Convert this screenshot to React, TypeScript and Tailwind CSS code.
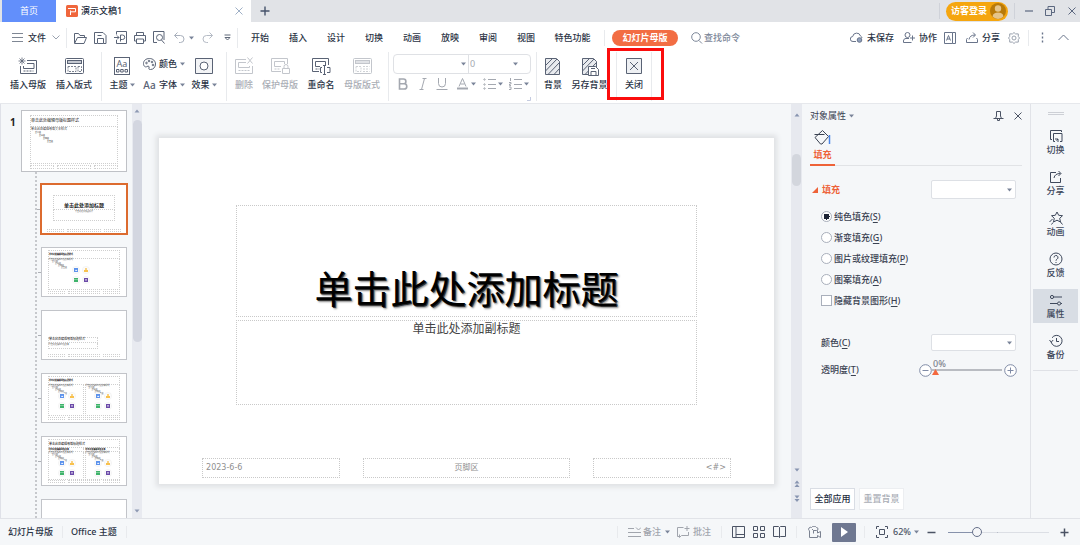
import React, { useState } from "react";

type IconProps = { w: number; h: number; className?: string; children: React.ReactNode };

function Icon({ w, h, className = "", children }: IconProps) {
  return (
    <svg
      width={w}
      height={h}
      viewBox={`0 0 ${w} ${h}`}
      fill="none"
      stroke="currentColor"
      strokeWidth="1"
      aria-hidden="true"
      className={`shrink-0 ${className}`}
    >
      {children}
    </svg>
  );
}

function Caret({ className = "" }: { className?: string }) {
  return (
    <Icon w={5} h={4} className={`text-[#7a8499] ${className}`}>
      <path d="M0 0.500h5L2.500 3.500z" fill="currentColor" stroke="none" />
    </Icon>
  );
}

function Divider({ className = "", dark }: { className?: string; dark?: boolean }) {
  return <span className={`w-px shrink-0 ${dark ? "bg-[#cfd2d9]" : "bg-[#e8eaed]"} ${className}`} />;
}

/* ---------- title bar ---------- */

function TitleBar() {
  return (
    <header className="flex h-[22px] shrink-0 items-stretch bg-[#e1e3e7] pl-[2px] text-[#2d3748]">
      <button className="w-[54px] bg-[#628ffb] text-white">首页</button>
      <div className="flex w-[195px] items-center bg-white pl-[10px]">
        <Icon w={12} h={12}>
          <rect width="12" height="12" rx="1.500" fill="#f0663c" stroke="none" />
          <path d="M2 3.500H9.500v3.300H4.500V10M4.500 6.800V5.500" stroke="#fff" />
        </Icon>
        <span className="ml-[3px] text-[9px] font-medium text-[#222b3c]">演示文稿1</span>
        <button aria-label="关闭标签" className="mr-2 ml-auto text-[#9fb0c6]">
          <Icon w={8} h={8}>
            <path d="M0.500 0.500l7 7M7.500 0.500l-7 7" />
          </Icon>
        </button>
      </div>
      <button aria-label="新建" className="ml-[9px] flex items-center text-[#46536b]">
        <Icon w={10} h={10}>
          <path d="M5 0.500v9M0.500 5h9" strokeWidth="1.400" />
        </Icon>
      </button>
      <div className="ml-auto flex items-center pr-1 text-[#5c6880]">
        <Divider dark className="h-4" />
        <button className="ml-[6px] flex h-[19px] w-[62px] items-center rounded-full bg-[#f5a60f] pl-[5px] font-bold text-white">
          访客登录
          <Icon w={16} h={16} className="ml-[3px]">
            <circle cx="8" cy="8" r="8" fill="#b87a0a" stroke="none" />
            <circle cx="8" cy="5.500" r="3.200" fill="#e5c48a" stroke="none" />
            <path d="M2.500 13.500c.5-3 2.500-4 5.500-4s5 1 5.500 4A8 8 0 0 1 8 16a8 8 0 0 1-5.500-2.500z" fill="#e5c48a" stroke="none" />
          </Icon>
        </button>
        <Divider dark className="ml-[6px] h-4" />
        <button aria-label="最小化" className="ml-[10px]">
          <Icon w={8} h={10}>
            <path d="M0 5h8" strokeWidth="1.200" />
          </Icon>
        </button>
        <button aria-label="还原" className="ml-3">
          <Icon w={10} h={10}>
            <path d="M0.500 3.500h6v6h-6zM3 3.500v-3h6.500v6h-3" />
          </Icon>
        </button>
        <button aria-label="关闭窗口" className="ml-[13px]">
          <Icon w={8} h={8}>
            <path d="M0.500 0.500l7 7M7.500 0.500l-7 7" />
          </Icon>
        </button>
      </div>
    </header>
  );
}

/* ---------- menu row ---------- */

const menuTabs = ["开始", "插入", "设计", "切换", "动画", "放映", "审阅", "视图"];

function MenuBar() {
  return (
    <nav className="flex h-[30px] shrink-0 items-center bg-white pt-px pr-[11px] pl-3 text-[#2b3446]">
      <button className="flex items-center">
        <Icon w={11} h={9} className="text-[#7f8794]">
          <path d="M0 0.500h11M0 4.500h11M0 8.500h11" />
        </Icon>
        <span className="ml-[5px] font-medium">文件</span>
        <Icon w={8} h={5} className="ml-[6px] text-[#9aa2b0]">
          <path d="M0.500 0.500l3.500 3.500 3.500-3.500" />
        </Icon>
      </button>
      <Divider className="ml-[6px] h-5" />
      <div className="ml-[7px] flex items-center gap-[7px] text-[#5a6477]">
        <button aria-label="打开">
          <Icon w={13} h={12}>
            <path d="M0.500 11V1.500h4l1.500 2h4.500V5M0.500 11.500h9.500l2.500-6H3.500l-3 6" />
          </Icon>
        </button>
        <button aria-label="保存">
          <Icon w={13} h={12}>
            <path d="M3 11.500H0.500v-11h8.500l3 3v8H9.500M3.500 11.500v-5h6v5zM3.500 3.500h4" />
          </Icon>
        </button>
        <button aria-label="输出为PDF">
          <Icon w={13} h={13}>
            <path d="M2.500 3.500v-3h10v12h-10V9M0 6.500h5M3 4.500l2 2-2 2M6.500 10.500v-6.500h2a2 2 0 0 1 0 4.500H6.500" />
          </Icon>
        </button>
        <button aria-label="打印">
          <Icon w={12} h={12}>
            <path d="M2.500 3.500v-3h7v3M2.500 9H0.500V3.500h11V9h-2M2.500 7h7v4.500h-7z" />
          </Icon>
        </button>
        <button aria-label="打印预览">
          <Icon w={12} h={13}>
            <path d="M4 11.500H0.500v-11h10.500V9" />
            <circle cx="6.500" cy="6.500" r="3" />
            <path d="M8.500 9l3 3.500" />
          </Icon>
        </button>
      </div>
      <button aria-label="撤销" className="ml-[9px] flex items-center text-[#a9b0bc]">
        <Icon w={11} h={11}>
          <path d="M3.500 0.500l-3 3 3 3M0.500 3.500h6a3.500 3.500 0 0 1 0 7H5" />
        </Icon>
        <Caret className="ml-1" />
      </button>
      <button aria-label="重做" className="ml-2 text-[#b5bbc5]">
        <Icon w={11} h={11}>
          <path d="M7.500 0.500l3 3-3 3M10.500 3.500h-6a3.500 3.500 0 0 0 0 7H6" />
        </Icon>
      </button>
      <button aria-label="自定义快速访问" className="ml-[11px] text-[#5f6878]">
        <Icon w={7} h={7}>
          <path d="M0.500 1h6M1 3.500h5L3.500 6z" />
        </Icon>
      </button>
      <Divider className="ml-[6px] h-5" />
      <div className="ml-[3px] flex font-medium">
        {menuTabs.map((t) => (
          <button key={t} className="w-[38px]">
            {t}
          </button>
        ))}
        <button className="w-[55px]">特色功能</button>
      </div>
      <Divider className="ml-1 h-4" />
      <button className="ml-[7px] h-4 w-[66px] rounded-full bg-[#f26d43] font-bold text-white">幻灯片母版</button>
      <label className="ml-[13px] flex items-center text-[#7d8799]">
        <Icon w={12} h={12}>
          <circle cx="5" cy="5" r="4.300" />
          <path d="M8 8.500l3 3" />
        </Icon>
        <input
          aria-label="查找命令"
          placeholder="查找命令"
          className="ml-px w-12 bg-transparent font-medium outline-none placeholder:text-[#7d8799]"
        />
      </label>
      <div className="ml-auto flex items-center text-[#69748a]">
        <button className="flex items-center gap-1">
          <Icon w={13} h={11}>
            <path d="M6 9.500H3a2.500 2.500 0 0 1-.3-5A4 4 0 0 1 10.500 4 2.600 2.600 0 0 1 12 6" />
            <circle cx="9.500" cy="8" r="2.300" fill="#8fa0bd" />
          </Icon>
          <span className="font-medium text-[#2b3446]">未保存</span>
        </button>
        <button className="ml-[9px] flex items-center gap-1">
          <Icon w={12} h={11}>
            <circle cx="4.500" cy="3" r="2.500" />
            <path d="M8.500 10.500h-8V9c0-1.500 1-2.500 2.500-2.500h3M9.500 3.500v5M7 6h5" />
          </Icon>
          <span className="font-medium text-[#2b3446]">协作</span>
        </button>
        <button aria-label="翻译" className="ml-[7px]">
          <Icon w={13} h={12}>
            <path d="M0.500 0.500h8v11h-8zM8.500 0.500h3v11h-3M2.500 8.500l2-5 2 5M3 7h3" />
          </Icon>
        </button>
        <button className="ml-[9px] flex items-center gap-1">
          <Icon w={12} h={11}>
            <path d="M1.500 6L0.500 7.500v3h11v-3L10.500 6M3 7.500c.5-3 2.500-4.500 6-4.500M7 0.500L9.500 3 7 5.500" />
          </Icon>
          <span className="font-medium text-[#2b3446]">分享</span>
        </button>
        <button aria-label="设置" className="ml-2 text-[#9aa2ae]">
          <Icon w={12} h={12}>
            <path d="M6 0.500l1.500 1.400h2.800v2.600l1.200 1.500-1.200 1.500v2.600H7.500L6 11.500 4.500 10.100H1.700V7.500L0.500 6l1.200-1.500V1.900h2.800z" />
            <circle cx="6" cy="6" r="2" />
          </Icon>
        </button>
        <Divider className="ml-2 h-4" />
        <button aria-label="更多" className="ml-3">
          <Icon w={3} h={11}>
            <path d="M1.500 0.500v2M1.500 4.500v2M1.500 8.500v2" strokeWidth="1.400" />
          </Icon>
        </button>
        <button aria-label="折叠功能区" className="ml-[14px]">
          <Icon w={11} h={7}>
            <path d="M0.500 6l5-5 5 5" />
          </Icon>
        </button>
      </div>
    </nav>
  );
}

/* ---------- ribbon ---------- */

type RibbonButtonProps = {
  label: string;
  icon: React.ReactNode;
  width: string;
  caret?: boolean;
  disabled?: boolean;
};

function RibbonButton({ label, icon, width, caret, disabled }: RibbonButtonProps) {
  return (
    <button
      disabled={disabled}
      className={`flex shrink-0 flex-col items-center pt-1 font-medium whitespace-nowrap ${width} ${
        disabled ? "text-[#a9adb5]" : "text-[#2b3446]"
      }`}
    >
      <span className={`flex h-5 items-center ${disabled ? "text-[#c3c6cc]" : "text-[#5a6375]"}`}>{icon}</span>
      <span className="mt-[3px] flex items-center gap-[2px]">
        {label}
        {caret && <Caret />}
      </span>
    </button>
  );
}

function Hatch({ children }: { children?: React.ReactNode }) {
  return (
    <Icon w={18} h={19}>
      <path d="M1.500 1.500h11l3 3v13h-14z" fill="#e9ebef" />
      <path d="M1.500 8.500l7-7M1.500 14l11.500-12M4 17.500l11.500-12M10 17.500l5.500-6" />
      {children}
    </Icon>
  );
}

function SmallTool({ label, className = "", children }: { label: string; className?: string; children: React.ReactNode }) {
  return (
    <button disabled aria-label={label} className={`flex h-4 items-center ${className}`}>
      {children}
    </button>
  );
}

function Ribbon() {
  return (
    <section className="flex h-[52px] shrink-0 items-stretch border-b border-[#e6e8ec] bg-white pl-[5px]">
      <RibbonButton
        label="插入母版"
        width="w-[46px]"
        icon={
          <Icon w={20} h={18}>
            <path d="M9 3.500h9.500v13h-16V9M9 6.500h7v5H5.500V9" />
            <path d="M5.500 14h10" strokeDasharray="2 1" />
            <path d="M4 0.500v7M0.500 4h7M1.500 1.500l5 5M6.500 1.500l-5 5" strokeWidth="0.800" />
          </Icon>
        }
      />
      <RibbonButton
        label="插入版式"
        width="w-[46px]"
        icon={
          <Icon w={19} h={17}>
            <rect x="0.500" y="0.500" width="18" height="15" rx="1" />
            <rect x="2.500" y="2.500" width="14" height="3" fill="#c5c9d1" />
            <path d="M3 8.500h8v5H3zM13 8.500h3.500v5H13z" strokeDasharray="2 1" strokeWidth="0.800" />
          </Icon>
        }
      />
      <Divider className="mb-[2px] ml-1" />
      <RibbonButton
        label="主题"
        width="w-[40px]"
        caret
        icon={
          <span className="flex h-[18px] w-4 flex-col items-center border border-current">
            <span className="text-[9px] leading-[11px] font-normal">Aa</span>
            <Icon w={12} h={4}>
              <path d="M0.500 0.500h2.500v2.500H0.500zM4.700 0.500h2.500v2.500H4.700zM9 0.500h2.500v2.500H9z" />
            </Icon>
          </span>
        }
      />
      <div className="flex w-[43px] shrink-0 flex-col gap-[9px] pt-[6px] pl-px font-medium text-[#2b3446]">
        <button className="flex items-center">
          <Icon w={13} h={12} className="text-[#5a6375]">
            <path d="M6.500 0.500C3 0.500 0.500 2.500 0.500 5.500s2 4 3.500 3 2.500 0 2 1.500 .5 1.500 1.500 1.500c3 0 5-2.500 5-5.500s-2.500-5.500-6-5.500z" />
            <circle cx="3.500" cy="5" r="0.800" />
            <circle cx="6" cy="3" r="0.800" />
            <circle cx="9" cy="4" r="0.800" />
            <circle cx="10" cy="7" r="0.800" />
          </Icon>
          <span className="ml-[3px]">颜色</span>
          <Caret className="ml-[3px]" />
        </button>
        <button className="flex items-center">
          <span className="w-[13px] text-[10px] text-[#5a6375]">Aa</span>
          <span className="ml-[3px]">字体</span>
          <Caret className="ml-[3px]" />
        </button>
      </div>
      <RibbonButton
        label="效果"
        width="w-[38px]"
        caret
        icon={
          <Icon w={18} h={16}>
            <path d="M0.500 0.500h17v15h-17z" fill="#f3f4f6" />
            <circle cx="9" cy="8" r="4" fill="#fff" />
          </Icon>
        }
      />
      <Divider className="mb-[2px] ml-[3px]" />
      <RibbonButton
        label="删除"
        width="w-[34px]"
        disabled
        icon={
          <Icon w={19} h={18}>
            <path d="M11 2.500H0.500v14h17V9M11 5.500H3.500v5h11V9M12.500 0.500l5 6M17.500 0.500l-5 6" />
            <path d="M3.500 13.500h11" strokeDasharray="2 1" />
          </Icon>
        }
      />
      <RibbonButton
        label="保护母版"
        width="w-[38px]"
        disabled
        icon={
          <Icon w={19} h={18}>
            <path d="M10 14.500H0.500v-13h16V7M10 9.500H3.500v-5h10V7M11.500 11.500h7v5h-7zM13 11.500V9.500a2 2 0 0 1 4 0v2" />
            <path d="M3.500 12h6" strokeDasharray="2 1" />
          </Icon>
        }
      />
      <RibbonButton
        label="重命名"
        width="w-[44px]"
        icon={
          <Icon w={19} h={18}>
            <path d="M7 14.500H0.500v-13h16V8M8 9.500H3.500v-5h10V8M10 10.500H8.500v5H10M15 10.500h3v5h-3M11 8.500h3M11 17.500h3M12.500 8.500v9" />
            <path d="M3.500 12h4" strokeDasharray="2 1" />
          </Icon>
        }
      />
      <RibbonButton
        label="母版版式"
        width="w-[38px]"
        disabled
        icon={
          <Icon w={19} h={17}>
            <rect x="0.500" y="0.500" width="18" height="15" rx="1" />
            <rect x="2.500" y="2.500" width="14" height="3" fill="#e0e2e6" />
            <path d="M3 8.500h5v5H3zM10 8.500h6.500M10 11h6.500M10 13.500h6.500" strokeDasharray="2 1" strokeWidth="0.800" />
          </Icon>
        }
      />
      <Divider className="mb-[2px] ml-[7px]" />
      <div className="ml-1 flex w-[138px] shrink-0 flex-col pt-[2px] text-[#a4a8b0]">
        <div className="flex h-5 shrink-0 rounded-sm border border-[#dfe1e5]">
          <div className="relative flex w-[75px] items-center border-r border-[#dfe1e5]">
            <select aria-label="字体名称" className="h-full w-full appearance-none bg-transparent outline-none">
              <option></option>
            </select>
            <Caret className="pointer-events-none absolute right-[2px]" />
          </div>
          <div className="relative flex flex-1 items-center">
            <select aria-label="字号" className="h-full w-full appearance-none bg-transparent pl-px outline-none">
              <option>0</option>
            </select>
            <Caret className="pointer-events-none absolute right-3" />
          </div>
        </div>
        <div className="mt-px flex h-[17px] shrink-0 items-center pl-[5px]">
          <SmallTool label="加粗" className="w-[21px]">
            <Icon w={10} h={12}>
              <path d="M1.500 1h4a2.400 2.400 0 0 1 0 4.800h-4zM1.500 5.800h4.700a2.600 2.600 0 0 1 0 5.200H1.500z" strokeWidth="1.600" />
            </Icon>
          </SmallTool>
          <SmallTool label="倾斜" className="w-[17px]">
            <Icon w={8} h={12}>
              <path d="M3.500 0.500H7.500M0.500 11.500h4M5.500 0.500l-3 11" />
            </Icon>
          </SmallTool>
          <SmallTool label="下划线" className="w-[21px]">
            <Icon w={12} h={12}>
              <path d="M2.500 0v5.500a3.500 3.500 0 0 0 7 0V0M0.500 11.500h11" />
            </Icon>
          </SmallTool>
          <SmallTool label="字体颜色" className="w-[26px]">
            <Icon w={11} h={12}>
              <path d="M2 8.500l3.500-8L9 8.500M3.500 6h4" />
              <path d="M0 10.500h11" strokeWidth="2" />
            </Icon>
            <Caret className="ml-[3px]" />
          </SmallTool>
          <SmallTool label="项目符号" className="w-[26px]">
            <Icon w={13} h={12}>
              <path d="M5 1.500h8M5 6.500h8M5 10.500h8" />
              <circle cx="1.500" cy="1.500" r="0.700" />
              <circle cx="1.500" cy="6.500" r="0.700" />
              <circle cx="1.500" cy="10.500" r="0.700" />
            </Icon>
            <Caret className="ml-[2px]" />
          </SmallTool>
          <SmallTool label="编号" className="w-5">
            <Icon w={13} h={12}>
              <path d="M5 1.500h8M5 6.500h8M5 10.500h8M1.500 0v3M0 4.500h2v1.500H0.500v1.500H2M0 9h2v2.500H0" />
            </Icon>
            <Caret className="ml-[2px]" />
          </SmallTool>
        </div>
        <Icon w={4} h={4} className="mt-[5px] ml-auto text-[#c4cbe0]">
          <path d="M3.500 0v3.500H0" />
        </Icon>
      </div>
      <Divider className="mb-[2px] ml-[5px]" />
      <RibbonButton label="背景" width="w-[32px]" icon={<Hatch />} />
      <RibbonButton
        label="另存背景"
        width="w-[41px]"
        icon={
          <Hatch>
            <path d="M7.500 9.500h7l3 3v6h-10zM10 18.500v-4h5v4M10 11.500h4" fill="#fff" />
          </Hatch>
        }
      />
      <div className="relative ml-[6px] flex">
        <Divider className="mb-[2px]" />
        <RibbonButton
          label="关闭"
          width="w-[34px]"
          icon={
            <Icon w={16} h={17}>
              <path d="M0.500 0.500h15v15h-15z" fill="#eef0f3" />
              <path d="M4 4l8 8M12 4l-8 8" />
            </Icon>
          }
        />
        <Divider className="mb-[2px]" />
        <span className="pointer-events-none absolute -top-[4px] -right-[12px] bottom-[3px] -left-[9px] z-10 border-3 border-[#fb0d0d]" />
      </div>
    </section>
  );
}

/* ---------- slide thumbnails ---------- */

const ph = "border border-dotted border-[#cfcfcf]";

function ThumbFooter() {
  return (
    <div className="mt-auto flex h-[3px] shrink-0 gap-[3px]">
      <span className={`w-[23%] ${ph}`} />
      <span className={`flex-1 ${ph}`} />
      <span className={`w-[23%] ${ph}`} />
    </div>
  );
}

function Levels() {
  return (
    <div className="text-[2px] leading-[2px] text-[#555]">
      <p>单击此处编辑母版文本样式</p>
      <p className="pl-[3px]">第二级</p>
      <p className="pl-[6px]">第三级</p>
      <p className="pl-[9px]">第四级</p>
      <p className="pl-[12px]">第五级</p>
    </div>
  );
}

function ContentIcons({ className = "" }: { className?: string }) {
  return (
    <Icon w={18} h={18} className={className}>
      <g stroke="#eeeeee" fill="#fbfbfb" strokeWidth="0.500">
        <circle cx="4" cy="4" r="3.700" />
        <circle cx="14" cy="4" r="3.700" />
        <circle cx="4" cy="14" r="3.700" />
        <circle cx="14" cy="14" r="3.700" />
      </g>
      <g stroke="none">
        <path d="M2 2h4v4H2z" fill="#5c92ec" />
        <path d="M3 5l1-1.500L5.500 5z" fill="#fff" />
        <path d="M12 6V4h1.300V2h1.400v2H16v2z" fill="#f8c14e" />
        <path d="M2 12h4v4H2z" fill="#3fb36b" />
        <path d="M2 13.500h4v.5H2z" fill="#bfe6cd" />
        <path d="M12 12h4v4h-4z" fill="#6b4aa8" />
        <path d="M13.300 13.200h1.400v1.400h-1.400z" fill="#fff" />
      </g>
    </Icon>
  );
}

function MiniContent({ single }: { single?: boolean }) {
  return (
    <div className={`relative flex-1 ${ph} border-t-0`}>
      <Levels />
      <ContentIcons className={`absolute top-[7px] left-1/2 ${single ? "-translate-x-3" : "-translate-x-2"}`} />
    </div>
  );
}

function MiniTitle({ large }: { large?: boolean }) {
  return (
    <div
      className={`flex h-[9px] shrink-0 items-center ${ph} ${
        large ? "text-[3px]" : "text-[2px] font-bold"
      } leading-[4px] text-black`}
    >
      单击此处编辑母版标题样式
    </div>
  );
}

function Thumb({ label, selected, children }: { label: string; selected?: boolean; children: React.ReactNode }) {
  return (
    <button
      aria-label={label}
      className={`relative flex h-[50px] w-full shrink-0 flex-col bg-white px-[6px] py-[2px] text-left ${
        selected ? "outline-2 -outline-offset-1 outline-[#dc6b2f]" : "border border-[#c2c4c9]"
      }`}
    >
      <span className="absolute top-1/2 -left-[4px] w-[3px] border-t border-[#aeb1b7]" />
      {children}
    </button>
  );
}

function ThumbPanel() {
  return (
    <aside className="flex w-[142px] shrink-0 border-l border-[#dfe1e8]">
      <div className="flex min-w-0 flex-1 flex-col overflow-hidden pt-[6px] pr-[5px]">
        <div className="flex shrink-0">
          <span className="w-5 pt-[6px] pl-[9px] text-[10px] leading-3 font-bold text-[#222]">1</span>
          <button
            aria-label="幻灯片母版 1"
            className="flex h-[62px] flex-1 flex-col border border-[#bfc1c6] bg-white px-2 pt-1 pb-[2px] text-left"
          >
            <div className={`h-3 text-[4px] leading-[10px] text-[#222] ${ph}`}>单击此处编辑母版标题样式</div>
            <div className={`flex-1 pt-px text-[2px] leading-[3px] text-[#333] ${ph} border-t-0`}>
              <p className="text-[3px] leading-[3px]">单击此处编辑母版文本样式</p>
              <p className="pl-1">第二级</p>
              <p className="pl-2">第三级</p>
              <p className="pl-3">第四级</p>
              <p className="pl-4">第五级</p>
            </div>
            <div className="mt-px flex h-1 gap-[3px]">
              <span className={`w-[27%] ${ph}`} />
              <span className={`flex-1 ${ph}`} />
              <span className={`w-[27%] ${ph}`} />
            </div>
          </button>
        </div>
        <div className="flex min-h-0 flex-1">
          <div className="ml-[34px] w-[2px] shrink-0 bg-[repeating-linear-gradient(180deg,#c6c8cc_0px,#c6c8cc_2px,transparent_2px,transparent_4px)]" />
          <div className="ml-1 flex min-w-0 flex-1 flex-col gap-[13px] pt-3">
            <Thumb label="标题幻灯片" selected>
              <div className={`mx-[6px] mt-[9px] flex h-[15px] items-end justify-center ${ph}`}>
                <span className="text-[5px] leading-[8px] font-bold text-[#222]">单击此处添加标题</span>
              </div>
              <div className={`mx-[6px] h-[11px] text-center text-[2px] leading-[3px] text-[#555] ${ph} border-t-0`}>
                单击此处添加副标题
              </div>
              <ThumbFooter />
            </Thumb>
            <Thumb label="标题和内容">
              <MiniTitle />
              <div className="flex h-[31px]">
                <MiniContent single />
              </div>
              <ThumbFooter />
            </Thumb>
            <Thumb label="节标题">
              <div className={`mt-[24px] flex h-[6px] w-[50px] items-end text-[3px] leading-[5px] text-[#222] ${ph}`}>
                单击此处编辑母版标题样式
              </div>
              <div className={`h-[6px] w-[50px] text-[2px] leading-[3px] text-[#555] ${ph} border-t-0`}>
                单击此处编辑母版文本
              </div>
              <ThumbFooter />
            </Thumb>
            <Thumb label="两栏内容">
              <MiniTitle />
              <div className="flex h-[31px] gap-px">
                <MiniContent />
                <MiniContent />
              </div>
              <ThumbFooter />
            </Thumb>
            <Thumb label="比较">
              <MiniTitle large />
              <div className="flex h-[4px] shrink-0 gap-px text-[2px] leading-[3px] font-bold text-black">
                <span className={`flex-1 ${ph} border-t-0`}>单击此处编辑母版文本</span>
                <span className={`flex-1 ${ph} border-t-0`}>单击此处编辑母版文本</span>
              </div>
              <div className="flex h-[28px] gap-px">
                <MiniContent />
                <MiniContent />
              </div>
              <ThumbFooter />
            </Thumb>
            <Thumb label="仅标题">
              <span />
            </Thumb>
          </div>
        </div>
      </div>
      <div className="flex w-[10px] shrink-0 flex-col items-center bg-[#e8eaf0] py-[5px] text-[#8e99b3]">
        <Arrow up />
        <span className="mt-[7px] h-[222px] w-[9px] rounded-full bg-[#d3d6e0]" />
        <Arrow className="mt-auto" />
      </div>
    </aside>
  );
}

function Arrow({ up, double, className = "" }: { up?: boolean; double?: boolean; className?: string }) {
  return (
    <Icon w={6} h={double ? 7 : 4} className={className}>
      <g fill="currentColor" stroke="none">
        {up ? <path d="M0.500 3.500h5L3 0.500z" /> : <path d="M0.500 0.500h5L3 3.500z" />}
        {double && (up ? <path d="M0.500 7h5L3 4z" /> : <path d="M0.500 4h5L3 7z" />)}
      </g>
    </Icon>
  );
}

/* ---------- slide canvas ---------- */

const box = "border border-dotted border-[#c9c9c9]";

function Canvas() {
  return (
    <main className="flex min-w-0 flex-1">
      <div className="flex min-w-0 flex-1 flex-col justify-center px-[17px]">
        <article className="flex aspect-video w-full flex-col bg-white shadow-[0_0_5px_3px_#dfe1e4]">
          <div className={`mx-auto mt-[67px] flex h-[112px] w-3/4 items-end justify-center ${box}`}>
            <h1 className="text-[38px] leading-[56px] font-normal text-black [text-shadow:1px_1px_0_#333,2px_2px_2px_#888]">
              单击此处添加标题
            </h1>
          </div>
          <div className={`mx-auto mt-[3px] h-[85px] w-3/4 text-center text-[12px] leading-4 text-[#444] ${box}`}>
            单击此处添加副标题
          </div>
          <div className="mt-auto mb-[6px] flex h-5 justify-between px-[7%] font-['DejaVu_Sans','Noto_Sans_CJK_SC',sans-serif] text-[8px] leading-[18px] text-[#8f8f8f]">
            <div className={`w-[26%] pl-[3px] ${box}`}>2023-6-6</div>
            <div className={`w-[39%] text-center ${box}`}>页脚区</div>
            <div className={`w-[26%] pr-1 text-right ${box}`}>&lt;#&gt;</div>
          </div>
        </article>
      </div>
      <div className="flex w-[11px] shrink-0 flex-col items-center bg-[#e7e9ef] pt-[9px] pb-4 text-[#8794b0]">
        <Arrow up />
        <span className="mt-[37px] h-8 w-[9px] rounded-full bg-[#d3d6dd]" />
        <Arrow className="mt-auto" />
        <Arrow up double className="mt-2" />
        <Arrow double className="mt-2" />
      </div>
    </main>
  );
}

/* ---------- property panel ---------- */

const fills: [string, string][] = [
  ["纯色填充", "S"],
  ["渐变填充", "G"],
  ["图片或纹理填充", "P"],
  ["图案填充", "A"],
];

function Key({ k }: { k: string }) {
  return (
    <>
      (<u className="underline-offset-2">{k}</u>)
    </>
  );
}

function Combo({ id, label, height }: { id: string; label: string; height: string }) {
  return (
    <div className="relative flex w-[85px] items-center">
      <select
        id={id}
        aria-label={label}
        className={`w-full appearance-none rounded-xs border border-[#dde0e5] bg-white outline-none ${height}`}
      >
        <option></option>
      </select>
      <Caret className="pointer-events-none absolute right-1" />
    </div>
  );
}

function PropertyPanel() {
  const [fill, setFill] = useState("S");
  const [alpha, setAlpha] = useState(0);
  return (
    <aside className="flex w-[229px] shrink-0 flex-col border-r border-[#e1e3e8] pr-2 pb-2 pl-2 font-medium text-[#3a4252]">
      <div className="flex h-6 shrink-0 items-center">
        <button className="flex items-center gap-[3px] font-normal">
          对象属性
          <Caret />
        </button>
        <button aria-label="固定" className="ml-auto text-[#4b5364]">
          <Icon w={11} h={11}>
            <path d="M2.500 7.500L3.500 5V0.500h4V5l1 2.500M0.500 7.500h10M4.500 7.500v2h2v-2" />
          </Icon>
        </button>
        <button aria-label="关闭面板" className="ml-[10px] text-[#4b5364]">
          <Icon w={8} h={8}>
            <path d="M0.500 0.500l7 7M7.500 0.500l-7 7" />
          </Icon>
        </button>
      </div>
      <div className="flex shrink-0 border-b border-[#e1e3e6]">
        <button className="-mb-px flex h-[38px] w-[25px] flex-col items-center border-b-2 border-[#ee6238] pt-[2px] font-bold text-[#ee6238]">
          <Icon w={17} h={15} className="text-[#3a4252]">
            <path d="M8.500 0.500l6 6-6.500 7.500H6.500L1 7.500zM0.500 4.500h10" />
            <path d="M15.500 5v9" stroke="#4a86e8" strokeWidth="1.500" />
          </Icon>
          <span className="mt-1">填充</span>
        </button>
      </div>
      <div className="mt-[14px] flex shrink-0 items-center pr-[6px] pl-[2px]">
        <Icon w={7} h={6}>
          <path d="M6 0v6H0z" fill="#ee6238" stroke="none" />
        </Icon>
        <span className="ml-[3px] font-bold text-[#ee6238]">填充</span>
        <div className="ml-auto">
          <Combo id="preset" label="填充预设" height="h-[19px]" />
        </div>
      </div>
      <div className="mt-[7px] flex shrink-0 flex-col pl-[11px]">
        {fills.map(([name, k]) => (
          <label key={k} className="flex h-[21px] items-center gap-[2px]">
            <input
              type="radio"
              name="fill"
              checked={fill === k}
              onChange={() => setFill(k)}
              className="h-[11px] w-[11px] appearance-none rounded-full border border-[#a9afbb] bg-white checked:bg-[radial-gradient(circle,#1d2536_0px,#1d2536_3px,#ffffff_3px)]"
            />
            <span>
              {name}
              <Key k={k} />
            </span>
          </label>
        ))}
        <label className="flex h-[21px] items-center gap-[2px]">
          <input type="checkbox" className="h-[11px] w-[11px] appearance-none border border-[#a9afbb] bg-white" />
          <span>
            隐藏背景图形
            <Key k="H" />
          </span>
        </label>
      </div>
      <div className="mt-[23px] flex shrink-0 items-center pr-[6px] pl-[11px]">
        <label htmlFor="fill-color">
          颜色
          <Key k="C" />
        </label>
        <div className="ml-auto">
          <Combo id="fill-color" label="颜色" height="h-[17px]" />
        </div>
      </div>
      <div className="mt-[11px] flex h-4 shrink-0 items-center pr-[5px] pl-[11px]">
        <label htmlFor="alpha">
          透明度
          <Key k="T" />
        </label>
        <button aria-label="降低透明度" className="ml-auto text-[#7f8ba6]" onClick={() => setAlpha(Math.max(0, alpha - 1))}>
          <Icon w={13} h={13}>
            <circle cx="6.500" cy="6.500" r="5.800" fill="#fff" />
            <path d="M3.500 6.500h6" />
          </Icon>
        </button>
        <div className="relative flex w-[70px] items-center">
          <output htmlFor="alpha" className="absolute -top-[7px] left-px text-[#7b818c]">
            {alpha}%
          </output>
          <input
            id="alpha"
            type="range"
            value={alpha}
            onChange={(e) => setAlpha(Number(e.target.value))}
            className="h-[10px] w-full appearance-none bg-transparent bg-[linear-gradient(#b9bcc2,#b9bcc2)] bg-[length:100%_2px] bg-[position:0px_4px] bg-no-repeat [&::-webkit-slider-thumb]:mt-[4px] [&::-webkit-slider-thumb]:h-[6px] [&::-webkit-slider-thumb]:w-[7px] [&::-webkit-slider-thumb]:appearance-none [&::-webkit-slider-thumb]:bg-[#f4683f] [&::-webkit-slider-thumb]:[clip-path:polygon(50%_0,100%_100%,0_100%)]"
          />
        </div>
        <button aria-label="提高透明度" className="ml-[2px] text-[#7f8ba6]" onClick={() => setAlpha(Math.min(100, alpha + 1))}>
          <Icon w={13} h={13}>
            <circle cx="6.500" cy="6.500" r="5.800" fill="#fff" />
            <path d="M3.500 6.500h6M6.500 3.500v6" />
          </Icon>
        </button>
      </div>
      <div className="mt-auto flex gap-1">
        <button className="h-[22px] w-[45px] border border-[#d9dde4] bg-white text-[#222b3c]">全部应用</button>
        <button disabled className="h-[22px] w-[45px] border border-[#eceef1] bg-white text-[#a9adb5]">
          重置背景
        </button>
      </div>
    </aside>
  );
}

/* ---------- side rail ---------- */

const rail: { label: string; icon: React.ReactNode; active?: boolean }[] = [
  {
    label: "切换",
    icon: <path d="M3 10.500H1.500v-9h11V3M6 12.500H4.500v-8h8.500v8h-2M6 10h3v3M9 10l-1.500 1.500" />,
  },
  { label: "分享", icon: <path d="M7 2.500H1.500v10h10V8M5 8c.5-3 2.500-4.500 6.500-4.500M9.500 1l2.500 2.500L9.500 6" /> },
  {
    label: "动画",
    icon: (
      <path d="M8 1l1.700 3.300 3.800.4-2.800 2.600.8 3.700L8 9.200 4.500 11l.8-3.700L2.500 4.700l3.800-.4zM3.500 8l-3 3M4 11.500L2.500 13.500M11.500 11l2 2.500" />
    ),
  },
  {
    label: "反馈",
    icon: (
      <>
        <circle cx="7" cy="7" r="6" />
        <path d="M5 5.500a2 2 0 1 1 3 1.700c-.7.400-1 .8-1 1.500M7 10v1" />
      </>
    ),
  },
  {
    label: "属性",
    active: true,
    icon: (
      <>
        <circle cx="3" cy="4" r="1.600" />
        <path d="M4.600 4H13M1 10.500h7.500M11.700 10.500H13" />
        <circle cx="10.100" cy="10.500" r="1.600" />
      </>
    ),
  },
  { label: "备份", icon: <path d="M2.200 8A5.500 5.500 0 1 0 3 3.800M0.500 6l1.700 2.200L4.200 6M7.500 4v3.500H10" /> },
];

function SideRail() {
  return (
    <aside className="flex w-[49px] shrink-0 flex-col items-center px-[2px] pt-2 text-[#3f495c]">
      <span className="h-[3px] w-4 border-y border-[#cdd0d6]" />
      <div className="mt-[10px] flex w-full flex-col gap-[7px] border-b border-[#dfe1e6] pb-[6px]">
        {rail.map((r) => (
          <button
            key={r.label}
            className={`flex h-[34px] flex-col items-center justify-center ${r.active ? "bg-[#d8dde4]" : ""}`}
          >
            <Icon w={14} h={14}>
              {r.icon}
            </Icon>
            <span className="leading-[13px] font-medium">{r.label}</span>
          </button>
        ))}
      </div>
    </aside>
  );
}

/* ---------- status bar ---------- */

function StatusBar() {
  const [zoom, setZoom] = useState(62);
  return (
    <footer className="flex h-[27px] shrink-0 items-center border-t border-[#e1e3e8] pr-[11px] pl-2 font-medium text-[#2b3446]">
      <span>幻灯片母版</span>
      <Divider className="ml-[9px] h-3" />
      <span className="ml-2">Office 主题</span>
      <Divider className="ml-[9px] h-3" />
      <div className="ml-auto flex items-center text-[#4b5364]">
        <Divider className="h-3" />
        <button className="ml-[10px] flex items-center text-[#a1a5ad]">
          <Icon w={13} h={11}>
            <path d="M0 1.500h6M0 5.500h13M0 9.500h13M8 0.500l2.500 2.500L13 0.500" />
          </Icon>
          <span className="ml-[2px]">备注</span>
          <Caret className="ml-1" />
        </button>
        <button className="ml-[7px] flex items-center text-[#a1a5ad]">
          <Icon w={13} h={12}>
            <path d="M6.500 1.500h-6v9h2M2.500 8.500v3l2-2h7V6M10 0v5M7.500 2.500h5" />
          </Icon>
          <span className="ml-[3px]">批注</span>
        </button>
        <Divider className="ml-[10px] h-3" />
        <button aria-label="普通视图" className="ml-[10px]">
          <Icon w={13} h={12}>
            <path d="M0.500 0.500h12v11h-12zM4 0.500v11M4 8.500h8.500" />
          </Icon>
        </button>
        <button aria-label="幻灯片浏览" className="ml-2">
          <Icon w={12} h={12}>
            <path d="M0.500 0.500h4v4h-4zM7.500 0.500h4v4h-4zM0.500 7.500h4v4h-4zM7.500 7.500h4v4h-4z" />
          </Icon>
        </button>
        <button aria-label="阅读视图" className="ml-2">
          <Icon w={13} h={12}>
            <path d="M6.500 1.500l-1-1h-5v10h5l1 1 1-1h5v-10h-5zM6.500 1.500v10" />
          </Icon>
        </button>
        <Divider className="ml-[10px] h-3" />
        <button aria-label="录制" className="ml-[11px] text-[#7b8291]">
          <Icon w={13} h={12}>
            <path d="M1.500 4.500v7h8v-2l3 2v-6l-3 1.500V4.500M1 4.500a2 2 0 0 1 2.500-3 3 3 0 0 1 5 0 1.500 1.500 0 0 1 0 3H5.500V7.500M5.500 4.500l-1.500-1.500" />
          </Icon>
        </button>
        <button
          aria-label="播放"
          className="ml-[11px] flex h-[19px] w-6 items-center justify-center rounded-[1px] bg-[#6f7891] text-white"
        >
          <Icon w={7} h={10}>
            <path d="M0 0l7 5-7 5z" fill="currentColor" stroke="none" />
          </Icon>
        </button>
        <Divider className="ml-2 h-3" />
        <button aria-label="适应窗口" className="ml-[11px]">
          <Icon w={12} h={12}>
            <path d="M0.500 3V0.500H3M9 0.500h2.500V3M11.500 9v2.500H9M3 11.500H0.500V9M3.500 3.500h5v5h-5z" />
          </Icon>
        </button>
        <button className="ml-[5px] flex items-center">
          {zoom}%
          <Caret className="ml-[3px]" />
        </button>
        <button aria-label="缩小" className="ml-2" onClick={() => setZoom(Math.max(10, zoom - 1))}>
          <Icon w={9} h={9}>
            <path d="M0.500 4.500h8" strokeWidth="1.500" />
          </Icon>
        </button>
        <input
          aria-label="显示比例"
          type="range"
          min={10}
          max={210}
          value={zoom}
          onChange={(e) => setZoom(Number(e.target.value))}
          className="ml-3 h-[11px] w-[101px] appearance-none bg-transparent bg-[linear-gradient(90deg,#8792ab_0%,#8792ab_28%,#dcdfe5_28%,#dcdfe5_49%,#b9bec9_49%,#b9bec9_50%,#dcdfe5_50%)] bg-[length:100%_1px] bg-center bg-no-repeat [&::-webkit-slider-thumb]:h-[10px] [&::-webkit-slider-thumb]:w-[10px] [&::-webkit-slider-thumb]:appearance-none [&::-webkit-slider-thumb]:rounded-full [&::-webkit-slider-thumb]:border [&::-webkit-slider-thumb]:border-[#66708a] [&::-webkit-slider-thumb]:bg-[#f5f6f8]"
        />
        <button aria-label="放大" className="ml-[11px]" onClick={() => setZoom(Math.min(210, zoom + 1))}>
          <Icon w={9} h={9}>
            <path d="M0.500 4.500h8M4.500 0.500v8" strokeWidth="1.500" />
          </Icon>
        </button>
      </div>
    </footer>
  );
}

export default function App() {
  return (
    <div
      lang="zh-CN"
      className="flex h-screen flex-col overflow-hidden bg-[#f5f7f9] font-['Noto_Sans','Noto_Sans_CJK_SC',sans-serif] text-[9px] leading-3 whitespace-nowrap"
    >
      <TitleBar />
      <MenuBar />
      <Ribbon />
      <div className="flex min-h-0 flex-1">
        <ThumbPanel />
        <Canvas />
        <PropertyPanel />
        <SideRail />
      </div>
      <StatusBar />
    </div>
  );
}
